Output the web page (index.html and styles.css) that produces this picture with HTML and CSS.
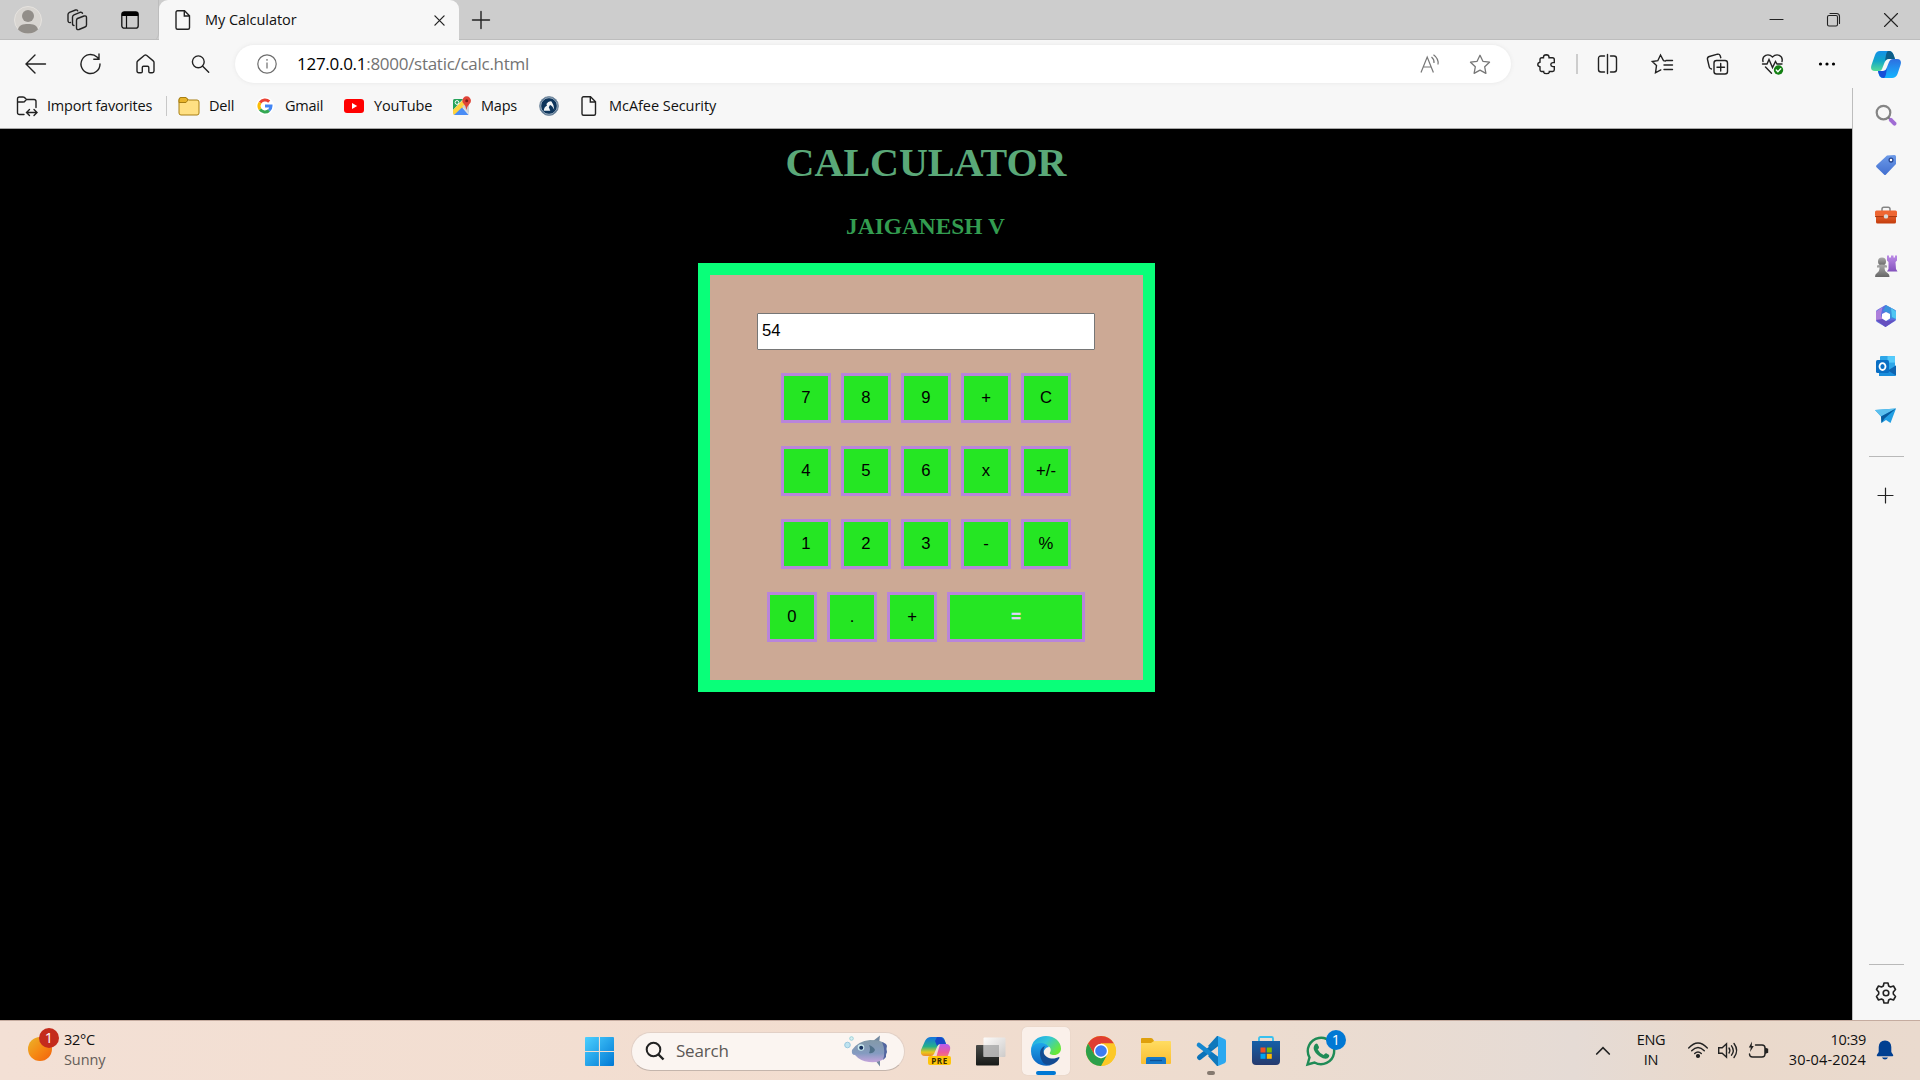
FILE: index.html
```html
<!DOCTYPE html>
<html lang="en">
<head>
<meta charset="utf-8">
<title>My Calculator</title>
<link rel="stylesheet" href="styles.css">
</head>
<body>
<svg class="defs" width="0" height="0" aria-hidden="true">
  <defs>
    <linearGradient id="sun" x1="0" y1="0" x2="1" y2="1"><stop offset="0" stop-color="#e9b52c"/><stop offset=".5" stop-color="#f58a14"/><stop offset="1" stop-color="#f2600c"/></linearGradient>
    <linearGradient id="win" x1="0" y1="0" x2="1" y2="1"><stop offset="0" stop-color="#4cd0ff"/><stop offset="1" stop-color="#0078d4"/></linearGradient>
    <linearGradient id="cpA" x1="0" y1="0" x2="0" y2="1"><stop offset="0" stop-color="#1390e8"/><stop offset=".5" stop-color="#12a6c8"/><stop offset="1" stop-color="#54dc98"/></linearGradient>
    <linearGradient id="cpB" x1="0" y1="0" x2="0" y2="1"><stop offset="0" stop-color="#2e6fe0"/><stop offset="1" stop-color="#14b4ff"/></linearGradient>
    <linearGradient id="preA" x1="0" y1="0" x2="0" y2="1"><stop offset="0" stop-color="#1474e0"/><stop offset=".5" stop-color="#25b08a"/><stop offset=".8" stop-color="#e8c81c"/><stop offset="1" stop-color="#f08a28"/></linearGradient>
    <linearGradient id="preB" x1="0" y1="0" x2="0" y2="1"><stop offset="0" stop-color="#b45cf0"/><stop offset=".6" stop-color="#ee5a98"/><stop offset="1" stop-color="#f88860"/></linearGradient>
    <linearGradient id="edgeTop" x1="0" y1="0" x2="1" y2=".6"><stop offset="0" stop-color="#1aa0e8"/><stop offset=".5" stop-color="#33c6d8"/><stop offset="1" stop-color="#68e838"/></linearGradient>
    <linearGradient id="edgeLow" x1="0" y1="0" x2="0" y2="1"><stop offset="0" stop-color="#1fa6ea"/><stop offset="1" stop-color="#0a62c0"/></linearGradient>
    <linearGradient id="folder" x1="0" y1="0" x2="0" y2="1"><stop offset="0" stop-color="#ffdc62"/><stop offset="1" stop-color="#fbbe30"/></linearGradient>
    <linearGradient id="store" x1="0" y1="0" x2="0" y2="1"><stop offset="0" stop-color="#1560a8"/><stop offset="1" stop-color="#253a6e"/></linearGradient>
    <linearGradient id="dark" x1="0" y1="0" x2="0" y2="1"><stop offset="0" stop-color="#494b49"/><stop offset="1" stop-color="#171a18"/></linearGradient>
    <linearGradient id="pane" x1="0" y1="0" x2="1" y2="1"><stop offset="0" stop-color="#fff"/><stop offset="1" stop-color="#c9c9c9"/></linearGradient>
    <linearGradient id="fish" x1="0" y1="0" x2="0" y2="1"><stop offset="0" stop-color="#8399a8"/><stop offset=".6" stop-color="#849bc0"/><stop offset="1" stop-color="#c4a4dc"/></linearGradient>
    <linearGradient id="tag" x1="0" y1="0" x2="0" y2="1"><stop offset="0" stop-color="#6c9ae8"/><stop offset="1" stop-color="#426fd0"/></linearGradient>
    <linearGradient id="violet" x1="0" y1="0" x2="0" y2="1"><stop offset="0" stop-color="#bb8ae6"/><stop offset="1" stop-color="#8352bc"/></linearGradient>
    <linearGradient id="grey" x1="0" y1="0" x2="0" y2="1"><stop offset="0" stop-color="#aaa"/><stop offset="1" stop-color="#666"/></linearGradient>
    <linearGradient id="box" x1="0" y1="0" x2="0" y2="1"><stop offset="0" stop-color="#e8602c"/><stop offset="1" stop-color="#c23c0c"/></linearGradient>
    <symbol id="page" viewBox="0 0 20 20"><path d="M4.5.8h7l5 5v11.900a1.500 1.500 0 0 1-1.500 1.500H4.500A1.500 1.500 0 0 1 3 17.700V2.300A1.500 1.500 0 0 1 4.500.8zM11.300.8V6h5.200"/></symbol>
    <symbol id="copilot" viewBox="0 0 30 27">
      <path d="M9 0h9c3 0 4 2 5 5l1 3h-6c-3 0-4 2-5 5l-2 5c-1 2-2 2-4 2H4c-4 0-4.500-3-3.500-6L4 4C5 1.500 6.500 0 9 0z" fill="url(#cpA)"/>
      <path d="M17 0c4 0 5 2 6 5l1 3h-6c-2 0-3 .5-4 2l1-6c.5-2 1-3.500 2-4z" fill="#0d5d88"/>
      <path d="M21 27h-9c-3 0-4-2-5-7h5c2 0 3-1 4-4l2-5c1-2 2-3 4-3h4c4 0 4.500 3 3.500 6l-3 9c-1 2.500-3 4-5.500 4z" fill="url(#cpB)"/>
      <path d="M13 27c-4 0-5-3-6-7h5c2 0 3-1 4-3l-1 6c-.5 2-1 3.500-2 4z" fill="#1650d8"/>
    </symbol>
  </defs>
</svg>

<div class="screen">
  <header class="titlebar">
    <div class="tab-tools">
      <svg width="28" height="28" viewBox="0 0 28 28"><circle cx="14" cy="14" r="13.500" fill="#d8d5d1" stroke="#e6e3df"/><circle cx="14" cy="10" r="6" fill="#928e89"/><path d="M4 23.500C5 19 9 18 14 18s9 1 10 5.500A13.500 13.500 0 0 1 14 27.500 13.500 13.500 0 0 1 4 23.500z" fill="#928e89"/></svg>
      <svg class="line collections" width="22" height="22" viewBox="0 0 22 22"><path d="M11.500 9.500l6.500-2.500q2.500-.6 2.500 1.500v7.500q0 1.500-1.500 2l-6 2.500q-2.500.6-2.500-1.500V11.500q0-1.500 1-2zM8 16.500q-1.500 0-1.500-2V8q0-1.500 1.500-2.200l6-2.500q2-.5 2.500 1M4.500 13.500Q2 14 2 11.500V5.500Q2 4 3.500 3.300l6-2.300q1.500-.4 2.200.8"/></svg>
      <svg class="tabmenu" width="18" height="18" viewBox="0 0 18 18"><rect x=".8" y=".8" width="16.400" height="16.400" rx="2.500" fill="none" stroke="#111" stroke-width="1.300"/><path d="M.8 5V3Q.8.800 3 .8h12q2.200 0 2.200 2.200v2z"/><path d="M5.500 5v12" stroke="#111" stroke-width="1.200"/></svg>
    </div>
    <div class="tab">
      <svg class="line" width="20" height="20"><use href="#page"/></svg>
      <span class="tab-title">My Calculator</span>
      <svg class="line tab-close" width="11" height="11" viewBox="0 0 12 12"><path d="M1 1l10 10M11 1L1 11"/></svg>
    </div>
    <svg class="line newtab" width="18" height="18" viewBox="0 0 18 18"><path d="M9 .500v17M.5 9h17"/></svg>
    <div class="window-buttons">
      <svg class="line thin" width="14" height="14" viewBox="0 0 14 14"><path d="M0 6.500h13"/></svg>
      <svg class="line thin" width="14" height="14" viewBox="0 0 14 14"><rect x=".5" y="2.500" width="10" height="10.500" rx="1.500"/><path d="M3 .500h6.500q3 0 3 3v7"/></svg>
      <svg class="line thin" width="14" height="14" viewBox="0 0 14 14"><path d="M.5.500l13 13M13.500.500l-13 13"/></svg>
    </div>
  </header>

  <nav class="toolbar">
    <div class="slots">
      <svg class="line" width="22" height="20" viewBox="0 0 22 20"><path d="M21 10H1.500M10.500 1L1.500 10l9 9"/></svg>
      <svg class="line" width="22" height="22" viewBox="0 0 22 22"><path d="M20.500 11a9.500 9.500 0 1 1-3-6.900l2 2M19.500 1v5.200h-5.200"/></svg>
      <svg class="line" width="20" height="20" viewBox="0 0 20 20"><path d="M1.500 8.500q0-1 .8-1.600L9 1.300q1-.7 2 0l6.700 5.600q.8.600.8 1.600V17q0 1.700-1.700 1.700h-2.300q-1.200 0-1.200-1.200v-4q0-1.200-1.200-1.200H8q-1.200 0-1.200 1.200v4q0 1.200-1.200 1.200H3.200q-1.700 0-1.700-1.700z"/></svg>
      <svg class="line" width="20" height="20" viewBox="0 0 20 20"><circle cx="7.800" cy="7.800" r="5.900"/><path d="M12.200 12.200l6 6"/></svg>
    </div>
    <div class="address">
      <svg width="20" height="20" viewBox="0 0 20 20" fill="none" stroke="#6d6d6d" stroke-width="1.200"><circle cx="10" cy="10" r="9.200"/><path d="M10 8.500v6M10 5v1.800"/></svg>
      <span class="url"><b>127.0.0.1</b>:8000/static/calc.html</span>
      <div class="address-actions">
        <svg width="20" height="20" viewBox="0 0 20 20" fill="none" stroke="#777" stroke-width="1.200"><path d="M1 18.500L7.200 3l6.200 15.500M3.200 13h8M11.500 3q3 2.500 2.500 6M13.500.7q5.500 4 4.500 9.800"/></svg>
        <svg width="22" height="21" viewBox="0 0 22 21" fill="none" stroke="#777" stroke-width="1.300" stroke-linejoin="round"><path d="M11 1.300l2.900 6 6.600.9-4.800 4.600 1.200 6.500-5.900-3.100-5.900 3.100 1.200-6.500L1.500 8.200l6.600-.9z"/></svg>
      </div>
    </div>
    <svg class="line extension" width="20" height="20" viewBox="0 0 20 20"><path d="M6.500 3.800V3q0-2 2.800-2.200Q12 1 12 3v.8h3.500q1.800 0 1.800 1.800v3h-1.500q-2 .2-2 2t2 2h1.500v3.200q0 1.700-1.800 1.700H12.300v.8q-.3 1.300-2.800 1.300t-2.800-1.300v-.8H4.500q-1.500 0-1.500-1.700v-3q-2.200-.2-2.200-2.200T3 8.200V5.600q0-1.800 1.800-1.800z"/></svg>
    <i class="rule"></i>
    <div class="slots">
      <svg class="line" width="20" height="20" viewBox="0 0 20 20"><path d="M7 2H3.500Q1 2 1 4.500v11Q1 18 3.500 18H7M13 2h3.500Q19 2 19 4.500v11q0 2.500-2.500 2.500H13M10 .5v19"/></svg>
      <svg class="line" width="22" height="20" viewBox="0 0 22 20"><path d="M14 7L12 6.700 9 1 6.300 6.700.8 7.500l4.200 4-1 7.300 5.300-2.900M14.500 6.500H21M12.500 11H21M12.500 15.500H21"/></svg>
      <svg class="line" width="22" height="22" viewBox="0 0 22 22"><rect x="7.500" y="7.500" width="13.500" height="13.500" rx="2.500"/><path d="M14.200 10.500v7.500M10.500 14.200H18M5 16q-1.800-.2-2.200-1.800L1 6.500Q.5 4.200 2.800 3.500L11 1.200q2-.4 2.700 1.500l.6 2"/></svg>
      <svg class="line" width="22" height="22" viewBox="0 0 22 22"><path d="M1.500 8.500Q.5 4 4.200 2.300 8 1 11 4q3-3 6.800-1.700Q21.500 4 20.500 8.500M1 11h4.500l2-4.500 3.500 8 3-6 1.500 2.500h5M4 14l6 6.200"/><circle cx="17" cy="17" r="4.700" fill="#138013" stroke="none"/><path d="M14.800 17l1.600 1.700 2.800-3" stroke="#fff"/></svg>
      <svg width="18" height="6" viewBox="0 0 18 6"><circle cx="2" cy="3" r="1.600"/><circle cx="8.500" cy="3" r="1.600"/><circle cx="15" cy="3" r="1.600"/></svg>
    </div>
    <svg class="copilot" width="30" height="27"><use href="#copilot"/></svg>
  </nav>

  <div class="middle">
    <div class="column">
      <div class="bookmarks">
        <div class="bm bm-import"><svg class="line" width="22" height="20" viewBox="0 0 22 20"><path d="M8 18.500H3.500Q1.500 18.500 1.500 16.500V3Q1.500 1 3.500 1H7q1.500 0 2.500 1.500L10.500 3.500h7.500q2 0 2 2v6M1.500 6H7q1.500 0 2.200-1.200L10.500 3.500M11 16.500h9.500M13.500 13.500l-3 3 3 3M18 13.500l3 3-3 3"/></svg><span>Import favorites</span></div>
        <div class="bm bm-dell"><svg width="22" height="20" viewBox="0 0 22 20"><path d="M1 4q0-2.500 2-2.500h5L10.500 4H19q2 0 2 2v11q0 2-2 2H3q-2 0-2-2z" fill="#ffe083" stroke="#a87f12"/><path d="M1 6.500V4q0-2.500 2-2.500h5L10 4 8 6.500z" fill="#e8b42a" stroke="#a87f12"/></svg><span>Dell</span></div>
        <div class="bm bm-gmail"><svg width="18" height="18" viewBox="0 0 18 18"><circle cx="9" cy="9" r="9" fill="#fff"/><g fill="none" stroke-width="3"><path d="M4.100 5.600A6 6 0 0 1 13.200 4.700" stroke="#ea4335"/><path d="M4.100 12.400a6 6 0 0 1 0-6.800" stroke="#fbbc05"/><path d="M13 13.500a6 6 0 0 1-8.900-1.100" stroke="#34a853"/><path d="M9 9h6a6 6 0 0 1-2 4.500" stroke="#4285f4"/></g></svg><span>Gmail</span></div>
        <div class="bm bm-youtube"><svg width="20" height="14" viewBox="0 0 20 14"><rect width="20" height="14" rx="3" fill="#f00"/><path d="M8 4l5.200 3L8 10z" fill="#fff"/></svg><span>YouTube</span></div>
        <div class="bm bm-maps"><svg width="20" height="20" viewBox="0 0 20 20"><rect x="1" y="3" width="16" height="16" rx="1.500" fill="#dfe3e6"/><path d="M2.500 3H11L1 14V4.500Q1 3 2.500 3z" fill="#26a35a"/><path d="M1 14L12 3l3 5L3 19q-2 0-2-2z" fill="#ffd23c"/><path d="M2 19l8-7.500 6.500 7.500z" fill="#4a8df6"/><path d="M10 10l7 7V8z" fill="#cdd2d5"/><circle cx="5" cy="6.500" r="1.900" fill="none" stroke="#fff"/><path d="M14.500 14q-.4-4-2.800-6.200A4.300 4.300 0 1 1 17.600 7.800Q15 10.500 14.500 14z" fill="#df4437"/><circle cx="14.700" cy="4.800" r="1.500" fill="#7c2018"/></svg><span>Maps</span></div>
        <svg class="bm-badge" width="20" height="20" viewBox="0 0 20 20"><circle cx="10" cy="10" r="9.400" fill="#0d355c" stroke="#8296a9"/><circle cx="10" cy="10" r="8.300" fill="none" stroke="#e6edf2" stroke-width=".7"/><path d="M4.800 14.800q.2-3.800 3.200-5.300l-.6-1.600Q9.500 4.700 12.500 5.500q2.500 3 2.800 8.500-2-4.500-4.300-5l-1.200 2.200 1.500 3.600z" fill="#f2f5f7"/></svg>
        <div class="bm bm-mcafee"><svg class="line" width="20" height="20"><use href="#page"/></svg><span>McAfee Security</span></div>
      </div>
      <main class="webpage">
        <h1>CALCULATOR</h1>
        <h3>JAIGANESH V</h3>
        <form class="calculator">
          <input class="display" type="text" value="54" readonly>
          <div class="keys"><button type="button">7</button><button type="button">8</button><button type="button">9</button><button type="button">+</button><button type="button">C</button></div>
          <div class="keys"><button type="button">4</button><button type="button">5</button><button type="button">6</button><button type="button">x</button><button type="button">+/-</button></div>
          <div class="keys"><button type="button">1</button><button type="button">2</button><button type="button">3</button><button type="button">-</button><button type="button">%</button></div>
          <div class="keys"><button type="button">0</button><button type="button">.</button><button type="button">+</button><button type="button" class="equals">=</button></div>
        </form>
      </main>
    </div>
    <aside class="sidebar">
      <div class="side-apps">
        <svg width="22" height="22" viewBox="0 0 22 22"><circle cx="8.500" cy="8.500" r="6.800" fill="none" stroke="#858585" stroke-width="2.200"/><path d="M13 13l2 2" stroke="#777" stroke-width="2"/><path d="M15.800 15.800l3.700 3.700" stroke="#a06cd4" stroke-width="4" stroke-linecap="round"/></svg>
        <svg width="22" height="22" viewBox="0 0 22 22"><path d="M12 1.500L19.500 1q1.500 0 1.500 1.500V10L11 20.500q-1 1-2 0l-7.500-7.300q-1-1 0-2z" fill="url(#tag)"/><circle cx="16" cy="6" r="1.900" fill="#fff" stroke="#27468f" stroke-width="1.300"/></svg>
        <svg width="22" height="20" viewBox="0 0 22 20"><path d="M7 6V4q0-1.800 1.800-1.800h4.400Q15 2.200 15 4v2" fill="none" stroke="#858585" stroke-width="1.500"/><path d="M1 10h20v7q0 1.500-1.500 1.500h-17Q1 18.500 1 17z" fill="url(#box)"/><rect y="5.500" width="22" height="6" rx="1.500" fill="#ee6632"/><path d="M0 11.500h22" stroke="#a53810"/><circle cx="11" cy="11.300" r="2.200" fill="#d8dbda"/></svg>
        <svg width="22" height="23" viewBox="0 0 22 23"><path d="M12 1h2v2h2V1h2.500v2H20V1h2v5l-1.500 1.500.5 7 1.500 2.500H12l1.500-2.500V7.500L12 6z" fill="url(#violet)"/><circle cx="7" cy="7" r="4" fill="url(#grey)"/><path d="M2 11q5-2 10 0v2H9.500q0 4 3 5.500 2 1 2 3.500 0 .5-1 .5h-12Q0 22.500 0 22q0-2.500 2-3.500 2.500-1.500 2.500-5.500H2z" fill="url(#grey)"/></svg>
        <svg width="22" height="22" viewBox="0 0 22 22"><path d="M10.500 0L20 5q1 .6 1 2v7q0 1.300-1 2l-9.500 6-8.500-5q-1-.6-1-2V7q0-1.400 1-2z" fill="#5a6ee0"/><path d="M7.500 2L1 6.500V15l6 4 1-4-2-5z" fill="#ad7fdb"/><path d="M11 0l9 5q1 .6 1 2v7l-6-1-1-5-6-2z" fill="#3a93dc"/><path d="M16 3l5 3.500V14l-4-2z" fill="#4fc6f2"/><path d="M1 15l6.500-1 4 2 9-1-10 7z" fill="#6550bf"/><path d="M11 7l4 2v4.500l-4 2.300-4-2.300V9z" fill="#fff"/></svg>
        <svg width="22" height="21" viewBox="0 0 22 21"><rect x="5" y=".5" width="15" height="18" rx="1" fill="#2ea6e8"/><path d="M12.500.5h7.500V7h-7.500z" fill="#55cbfb"/><path d="M4 20.500V13l9 2 8-5v9.500q0 1-1 1z" fill="#1a8edc"/><path d="M13 15l8 5V10z" fill="#0f64b0"/><rect x="1" y="4.500" width="13" height="13" rx="1.500" fill="#0a6fc4"/><ellipse cx="7.500" cy="11" rx="3" ry="3.400" fill="none" stroke="#fff" stroke-width="1.800"/></svg>
        <svg width="22" height="22" viewBox="0 0 22 22"><path d="M0 5L21 3.500 15.500 18 11 15l-4.500 3-.5-6.500z" fill="#229fe3"/><path d="M0 5l21-1.500L6 11.500z" fill="#5cc0ee"/><path d="M6 11.500L21 3.500 9.500 13.500 6.500 18z" fill="#075b9e"/></svg>
      </div>
      <hr>
      <svg class="line side-add" width="16" height="16" viewBox="0 0 16 16"><path d="M7.500 0v15M0 7.500h15"/></svg>
      <hr class="settings-rule">
      <svg class="line side-gear" width="22" height="22" viewBox="0 0 22 22"><path d="M9 1h4l.7 3 1.800 1 3-1 2 3.500L18.300 10v2l2.200 2.500-2 3.500-3-1-1.800 1L13 21H9l-.7-3-1.800-1-3 1-2-3.500L3.700 12v-2L1.500 7.500l2-3.500 3 1 1.800-1z" stroke-linejoin="round" stroke-width="1.600"/><circle cx="11" cy="11" r="2.800" stroke-width="1.600"/></svg>
    </aside>
  </div>

  <footer class="taskbar">
    <div class="weather">
      <div class="badged"><svg width="24" height="24"><circle cx="12" cy="12" r="12" fill="url(#sun)"/></svg><span class="badge red">1</span></div>
      <div class="stack"><span>32°C</span><span class="muted">Sunny</span></div>
    </div>
    <div class="apps">
      <svg class="start" width="29" height="29" viewBox="0 0 29 29"><path d="M1 0h12.900v13.900H0V1q0-1 1-1zM15 0h13q1 0 1 1v12.900H15zM0 15h13.900v14H1q-1 0-1-1zM15 15h14v13q0 1-1 1H15z" fill="url(#win)"/></svg>
      <div class="search">
        <svg width="20" height="20" viewBox="0 0 20 20" fill="none" stroke="#222" stroke-width="2"><circle cx="8.500" cy="8.500" r="6.800"/><path d="M13.500 13.500l5 5" stroke-width="2.400"/></svg>
        <span>Search</span>
        <svg class="fish" width="44" height="32" viewBox="0 0 44 32"><circle cx="3.500" cy="10" r="2.800" fill="#bfe3ef" stroke="#98c7df"/><circle cx="7.500" cy="3.500" r="1.800" fill="#d9eef2" stroke="#9cd4da"/><path d="M29 6l7-5.500L35 9zM31 25l5 6.500V24z" fill="#7389a0"/><path d="M8 15q6-9 18-10 13 0 16 5 2 6-1 13-5 5-16 4-9-1-14-7-4 0-3-5z" fill="url(#fish)"/><path d="M38 7l4 2 1 2-1 3 1 3-1 2v3l-3 3q3-9-1-18z" fill="#5266a0"/><circle cx="17" cy="12.500" r="3.300" fill="#c9e8ee"/><circle cx="17.200" cy="12.800" r="2" fill="#17315e"/><path d="M25 10q5 2 6 5-2 4-6 3 2-4 0-8z" fill="#50718a"/></svg>
      </div>
      <div class="app"><svg width="30" height="30" viewBox="0 0 30 30"><path d="M10 1h10q3 0 4 4l1 3h-6q-2 0-3 3l-3 7q-1 2-3 2H4q-5 0-4-6l4-9q2-4 6-4z" fill="url(#preA)"/><path d="M18 1q5 0 7 7h-6q-2 0-3 2l-2-5 2-4z" fill="#1848c8"/><path d="M19 8h7q4 1 3 6l-3 8H15z" fill="url(#preB)"/><rect x="7" y="20" width="23" height="9" rx="2" fill="#ffc60a"/><text x="18.500" y="27.500" class="pre">PRE</text></svg></div>
      <div class="app"><svg width="30" height="29" viewBox="0 0 30 29"><rect y="8" width="23" height="20.500" rx="1" fill="url(#dark)"/><rect x="7.500" y=".5" width="22" height="19.500" rx="1" fill="url(#pane)" opacity=".9"/><path d="M7.500 8H23v12H7.500z" fill="#a5a5a5" opacity=".7"/></svg></div>
      <div class="app active"><svg width="30" height="30" viewBox="0 0 30 30"><path d="M0 15C0 5 7 0 15 0c9 0 15 6 15 12.500 0 4-3 6.500-7 6.500-3 0-5-1-4-2.500 2-3 0-6.500-4-7.500C8 7 1 10 0 15z" fill="url(#edgeTop)"/><path d="M0 15c0-5 4-8 9-8 4.500 0 8 2 9 4-3 0-6 3-5.500 8 .5 6 5 10 9 9.500C13 32 0 28 0 15z" fill="url(#edgeLow)"/><path d="M9 17c0-3 2-6 5-7-3 4-1.500 9 2 11 4 2.500 9 1.500 12 0 .7 0 .6.800.3 1.200C24 30 14 31 11 25c-1.300-2.500-2-5-2-8z" fill="#134b92"/></svg><i class="running"></i></div>
      <div class="app"><svg width="30" height="30" viewBox="0 0 30 30"><circle cx="15" cy="15" r="15" fill="#fbc924"/><path d="M2 7.500A15 15 0 0 1 28 7.500H15l-6.500 11.200z" fill="#e03e31"/><path d="M2 7.500l6.500 11.200L15 22.500l6-3.500L15.500 30A15 15 0 0 1 2 7.500z" fill="#2ca04a"/><path d="M15 7.500h13A15 15 0 0 1 15 30l6.500-11.200z" fill="#fcc826"/><circle cx="15" cy="15" r="7.200" fill="#fff"/><circle cx="15" cy="15" r="5.800" fill="#3d7df2"/></svg></div>
      <div class="app"><svg width="30" height="28" viewBox="0 0 30 28"><path d="M1 1h9q1.500 0 2.500 2l1 2H30v5H0V2q0-1 1-1z" fill="#dfa00c"/><path d="M0 6h10l3-2h16q1 0 1 1v21q0 1-1 1H1q-1 0-1-1z" fill="url(#folder)"/><path d="M5 27v-5q0-2 2-2h16q2 0 2 2v5z" fill="#1678c8"/><path d="M9 23.500h12" stroke="#0b4f94" stroke-width="1.300"/></svg></div>
      <div class="app"><svg width="30" height="30" viewBox="0 0 30 30"><path d="M22 7L3.500 21.500" stroke="#0b72b8" stroke-width="5" stroke-linecap="round"/><path d="M3 9l19 14.500" stroke="#1587cf" stroke-width="4.600" stroke-linecap="round"/><path d="M21 0h1v9l-6 4.500-4-3.500zM12 20l4-3.500 6 4.500v9h-1z" fill="#0f78bc"/><path d="M22 0l6.500 3Q30 3.700 30 5v20q0 1.500-1.500 2.200L22 30z" fill="#2ba8f0"/></svg><i class="open"></i></div>
      <div class="app"><svg width="30" height="30" viewBox="0 0 30 30"><path d="M8 7V2.500Q8 1 9.500 1h11Q22 1 22 2.500V7" fill="none" stroke="#38c0ee" stroke-width="1.800"/><path d="M1 5h28v20q0 4-4 4H5q-4 0-4-4z" fill="url(#store)"/><path d="M9.500 11.500h5v5h-5z" fill="#f25022"/><path d="M15.800 11.500h5v5h-5z" fill="#7fba00"/><path d="M9.500 17.800h5v5h-5z" fill="#00a4ef"/><path d="M15.800 17.800h5v5h-5z" fill="#ffb900"/></svg></div>
      <div class="app badged"><svg width="30" height="30" viewBox="0 0 30 30"><path d="M1.500 28.500l2-7A13.200 13.200 0 1 1 8.500 26.500z" fill="none" stroke="#1f8b56" stroke-width="2.400"/><path d="M8.500 9q1.500-2.500 3-1l1.500 3q.3 1-1.300 2.500 2 4 6 5.500 1.500-2 2.500-1.700l3 1.700q.5 2-1.500 3.200-3 1.500-8-1.700-5-3.500-6-7.500-.3-2 .8-4z" fill="#1f8b56"/></svg><span class="badge blue">1</span></div>
    </div>
    <div class="tray">
      <svg class="line chevron" width="14" height="9" viewBox="0 0 14 9"><path d="M.7 8L7 1.700 13.300 8" stroke-width="1.700"/></svg>
      <div class="stack lang"><span>ENG</span><span>IN</span></div>
      <div class="status">
        <svg class="line" width="20" height="16" viewBox="0 0 20 16"><path d="M.7 6q9.300-10 18.600 0M3.700 8.800q6.300-6.600 12.600 0M6.700 11.600q3.300-3.300 6.600 0"/><circle cx="10" cy="14" r="1.400" fill="#222"/></svg>
        <svg class="line" width="20" height="17" viewBox="0 0 20 17"><path d="M.7 5.700h3.500L8.500 1.800v13.400l-4.300-4H.7zM11 6q1.700 2.500 0 5M13.500 3.800q3.500 4.700 0 9.400M16 1.500q5.300 7 0 14"/></svg>
        <svg class="line" width="20" height="18" viewBox="0 0 20 18"><path d="M7.500 4H14q3 0 3 3v6q0 3-3 3H4.500q-3 0-3-3"/><path d="M17.500 7.500v4.500l2-.8V8.300z" fill="#222"/><path d="M4 .5L.8 6.500h2L2 11l3.800-6H3.700z" fill="#222" stroke="none"/></svg>
      </div>
      <div class="stack clock"><span>10:39</span><span class="date">30-04-2024</span></div>
      <svg width="18" height="20" viewBox="0 0 18 20"><path d="M9 .5q-6 .3-6.300 6.500v5L.8 15q-.3 1.300 1 1.300h14.400q1.300 0 1-1.300l-1.900-3V7Q15 .8 9 .5zM6 17.500h6q-.8 2-3 2t-3-2z" fill="#003f91"/></svg>
    </div>
  </footer>
</div>
</body>
</html>
```
FILE: styles.css
```css
* { box-sizing: border-box; }
body {
  margin: 0;
  background: #000;
  color: #111;
  font: 14.5px/20px "Open Sans", "Noto Sans", sans-serif;
  overflow: hidden;
}
svg { display: block; flex: none; overflow: visible; }
.defs { position: absolute; }
.line { fill: none; stroke: #222; stroke-width: 1.4; stroke-linecap: round; }
.thin { stroke-width: 1.1; }
.screen { display: flex; flex-direction: column; width: 1920px; height: 1080px; background: #f7f7f7; }

/* Window title bar */
.titlebar { display: flex; align-items: center; flex: none; height: 40px; background: #cdcdcd; box-shadow: inset 0 -1px #bdbdbd; }
.tab-tools { display: flex; align-items: center; width: 159px; height: 40px; padding-left: 14px; border-bottom-right-radius: 6px; border-right: 1px solid #bdbdbd; }
.collections { margin-left: 24px; }
.tabmenu { margin-left: 33px; }
.tab { display: flex; align-items: center; width: 300px; height: 40px; padding: 0 14px; background: #f7f7f7; border-radius: 9px 9px 0 0; }
.tab-title { margin-left: 12px; letter-spacing: -.05px; white-space: nowrap; }
.tab-close { margin-left: auto; }
.newtab { margin-left: 13px; }
.window-buttons { display: flex; gap: 43px; margin-left: auto; padding-right: 22px; }

/* Navigation toolbar */
.toolbar { display: flex; align-items: center; flex: none; height: 48px; padding-left: 8px; }
.slots { display: flex; align-items: center; }
.slots svg { width: 55px; }
.address { display: flex; align-items: center; width: 1276px; height: 38px; margin-left: 7px; padding: 0 20px 0 22px; background: #fff; border-radius: 19px; box-shadow: 0 0 4px #e6e6e6; }
.url { margin-left: 20px; color: #737373; font-size: 17px; letter-spacing: -.28px; white-space: nowrap; }
.url b { color: #000; font-weight: 400; }
.address-actions { display: flex; gap: 29px; margin-left: auto; }
.extension { margin-left: 26px; }
.rule { width: 2px; height: 20px; margin: 0 2px 0 19px; background: #cdcdcd; }
.copilot { margin-left: 16px; }

.middle { display: flex; flex: none; height: 932px; }
.column { width: 1852px; }

/* Favorites bar */
.bookmarks { display: flex; align-items: center; height: 41px; padding: 0 0 4px 16px; border-bottom: 1px solid #a7a7a7; }
.bm { display: flex; align-items: center; gap: 9px; white-space: nowrap; letter-spacing: -.22px; }
.bm-import { width: 151px; height: 20px; border-right: 1px solid #c8c8c8; }
.bm-dell { width: 77px; margin-left: 11px; }
.bm-gmail { width: 88px; margin-left: 1px; gap: 11px; }
.bm-youtube { width: 108px; gap: 10px; }
.bm-maps { width: 87px; }
.bm-mcafee { margin-left: 20px; gap: 10px; letter-spacing: -.05px; }

/* Calculator page */
.webpage { height: 891px; background: #000; text-align: center; overflow: hidden; }
h1, h3 { margin: 0; font-family: "Liberation Serif", "Times New Roman", serif; font-weight: 700; }
h1 { padding-top: 11px; color: #5aa878; font-size: 40px; line-height: 46px; }
h3 { padding: 27px 1px 0 0; color: #339c50; font-size: 23.4px; line-height: 27px; }
.calculator { width: 457px; height: 429px; margin: 23px auto 0 698px; padding-top: 38px; background: #cca995; border: 12px solid #09ff79; }
.display { display: block; width: 338px; height: 37px; margin: 0 auto 23px 47px; padding: 0 4px 2px; background: #fff; border: 1px solid #767676; border-radius: 1px; outline: 0; color: #000; font: 16.67px "Liberation Sans", Arial, sans-serif; }
.keys { display: flex; justify-content: center; gap: 10px; height: 50px; margin: 0 1px 23px 0; }
.keys button { width: 50px; height: 50px; padding: 0 0 1px; background: #25e623; border: 3px solid #b985da; border-radius: 0; color: #000; font: 16.67px "Liberation Sans", Arial, sans-serif; }
.keys .equals { width: 138px; color: #e3d5fa; font-weight: 700; -webkit-text-stroke: .4px #e3d5fa; }

/* Edge sidebar */
.sidebar { display: flex; flex-direction: column; align-items: center; width: 68px; padding-right: 1px; border-left: 1px solid #bdbdbd; background: #f7f7f7; }
.side-apps { display: flex; flex-direction: column; padding-top: 2px; }
.side-apps svg { height: 50.2px; }
.sidebar hr { width: 35px; height: 1px; margin: 15px 0 31px; border: 0; background: #b9b9b9; }
.side-add { stroke-width: 1.2; }
.sidebar .settings-rule { margin: auto 0 17px; }
.side-gear { margin-bottom: 16px; }

/* Windows taskbar */
.taskbar { display: flex; flex: none; height: 60px; border-top: 1px solid #c5aca0; background: linear-gradient(90deg, #f3e0d5 0%, #f2ddcf 45%, #eddccf 65%, #e5dbd5 82%, #ead9cb 90%, #eadace 100%); }
.stack { display: flex; flex-direction: column; letter-spacing: -.3px; white-space: nowrap; }
.muted { color: #655d58; letter-spacing: -.1px; }
.weather { display: flex; width: 585px; padding: 9px 0 0 28px; gap: 12px; }
.weather svg { margin-top: 7px; }
.badged { position: relative; }
.badge { position: absolute; width: 20px; height: 20px; border-radius: 50%; color: #fff; text-align: center; font-size: 14.5px; line-height: 20px; }
.red { left: 11px; top: -2px; background: #c42b1c; }
.blue { left: 29px; top: 3px; background: #0078d4; }
.apps { display: flex; align-items: center; height: 60px; }
.search { display: flex; align-items: center; width: 274px; height: 39px; margin: 0 5px 0 17px; padding: 0 16px 0 13px; border-radius: 20px; background: #fbf5f1; border: 1px solid #e2d0c6; border-bottom-color: #c4b5ac; color: #5c5855; font-size: 17px; }
.search span { margin-left: 11px; letter-spacing: -.2px; }
.fish { margin-left: auto; }
.app { position: relative; display: flex; align-items: center; justify-content: center; width: 48px; height: 48px; margin-right: 7px; border-radius: 5px; }
.active { background: #faf0ea; box-shadow: 0 0 1px #cbb9ae; }
.app:nth-child(3) { margin-left: 2px; }
.pre { fill: #3b2d00; font: 700 8px "Open Sans", sans-serif; text-anchor: middle; letter-spacing: .5px; }
.running, .open { position: absolute; bottom: 0; height: 4px; border-radius: 2px; }
.running { width: 20px; background: #0078d4; }
.open { width: 8px; background: #85796f; }
.tray { display: flex; align-items: center; height: 58px; margin-left: auto; padding-right: 26px; }
.lang { align-items: center; width: 40px; margin-left: 21px; }
.status { display: flex; align-items: center; gap: 10px; margin-left: 17px; }
.clock { align-items: flex-end; width: 98px; margin-right: 10px; }
.date { letter-spacing: .15px; }
```
